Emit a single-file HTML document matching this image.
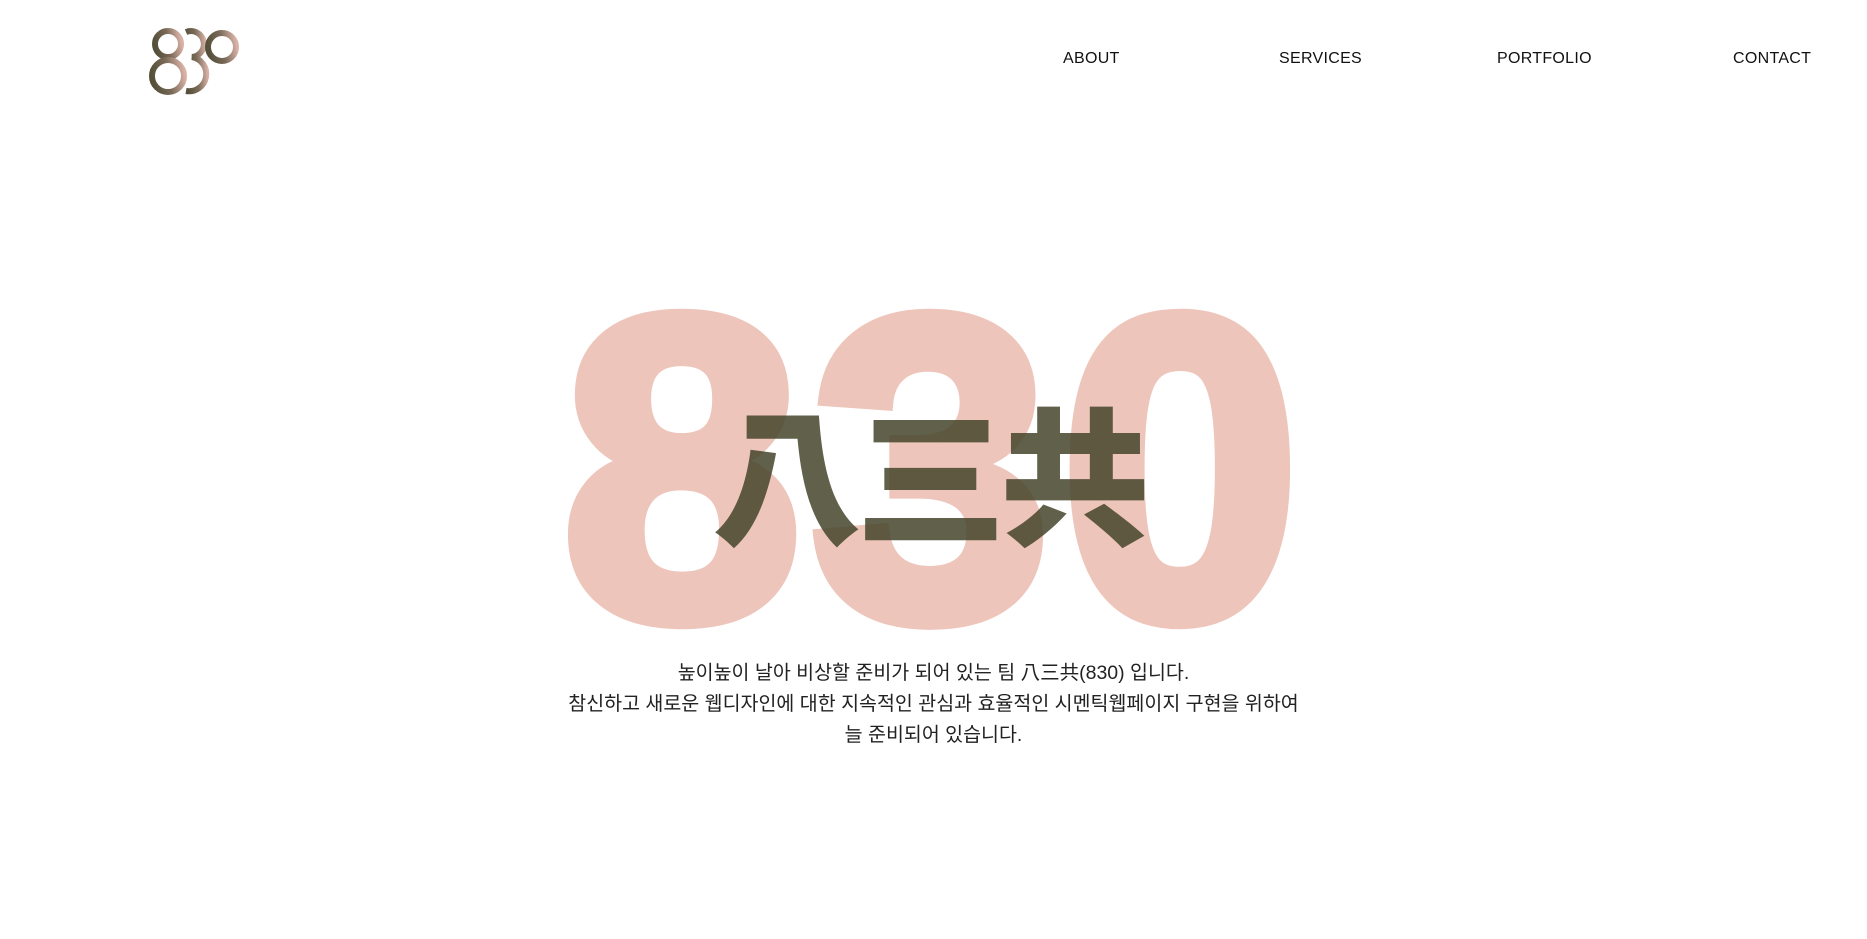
<!DOCTYPE html>
<html><head><meta charset="utf-8">
<style>
html,body{margin:0;padding:0;background:#fff;width:1867px;height:939px;overflow:hidden;position:relative;font-family:"Liberation Sans","Noto Sans CJK KR",sans-serif;}
.nav{position:absolute;top:50px;font-size:16px;color:#111;letter-spacing:0.3px}
.big{position:absolute;left:536px;top:239px;width:800px;text-align:center;font-family:"Liberation Sans",sans-serif;font-weight:bold;font-size:430px;line-height:460px;color:#eec5ba;-webkit-text-stroke:16px #eec5ba;letter-spacing:10px;}
.cjk{position:absolute;left:712px;top:380px;font-family:"Noto Sans CJK JP","Noto Sans CJK SC",sans-serif;font-weight:900;font-size:150px;line-height:180px;color:rgba(68,68,44,0.85);letter-spacing:-6px;white-space:nowrap}
.txt{position:absolute;left:0;width:1867px;top:658px;text-align:center;font-size:19.5px;line-height:31px;color:#222;font-family:"Liberation Sans","Noto Sans CJK KR",sans-serif;}
</style></head><body>
<svg style="position:absolute;left:148px;top:24px" width="94" height="74" viewBox="0 0 94 74">
<defs><linearGradient id="g" x1="0" x2="1" y1="0.5" y2="0.3"><stop offset="0" stop-color="#55503a"/><stop offset="0.5" stop-color="#7a6a58"/><stop offset="1" stop-color="#d8b2a6"/></linearGradient></defs>
<g fill="none" stroke="url(#g)" stroke-width="6">
<circle cx="20" cy="20" r="13"/>
<circle cx="20" cy="52" r="16"/>
<path d="M38 8 A13 13 0 1 1 44 33 A16 16 0 1 1 38 67"/>
<circle cx="74" cy="23" r="14"/>
</g></svg>
<div class="nav" style="left:1063px">ABOUT</div>
<div class="nav" style="left:1279px">SERVICES</div>
<div class="nav" style="left:1497px">PORTFOLIO</div>
<div class="nav" style="left:1733px">CONTACT</div>
<div class="big">830</div>
<div class="cjk">八三共</div>
<div class="txt">높이높이 날아 비상할 준비가 되어 있는 팀 八三共(830) 입니다.<br>참신하고 새로운 웹디자인에 대한 지속적인 관심과 효율적인 시멘틱웹페이지 구현을 위하여<br>늘 준비되어 있습니다.</div>
</body></html>
